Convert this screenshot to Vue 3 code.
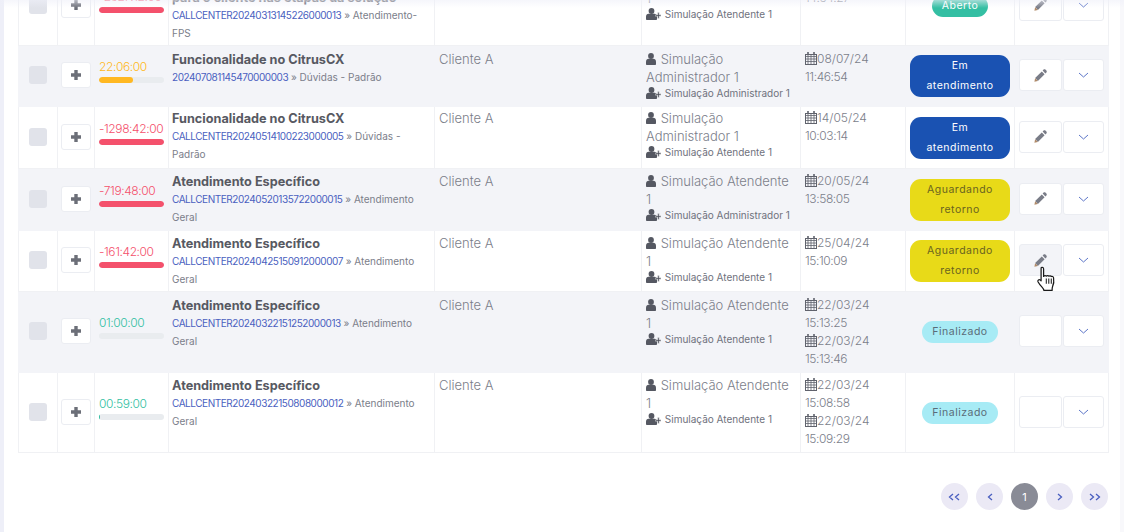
<template>
  <div class="page">
    <div class="panel">
      <table class="grid">
        <colgroup>
          <col v-for="w in colWidths" :key="w.id" :style="{ width: w.px + 'px' }" />
        </colgroup>
        <tbody>
          <tr v-for="(row, i) in rows" :key="i" :class="{ alt: i % 2 === 1 }" :style="{ height: row.h + 'px', '--pad': row.pad + 'px', '--pad2': (row.pad2 ?? row.pad) + 'px' }">
            <td class="c-check"><span class="check"></span></td>
            <td class="c-plus">
              <button class="plus">
                <svg width="12" height="12" viewBox="0 0 12 12"><path d="M4.300 1h3.400v3.300H11v3.400H7.700V11H4.300V7.700H1V4.300h3.300z" fill="#6c6f78" /></svg>
              </button>
            </td>
            <td class="c-time">
              <div class="time" :style="{ color: row.color }">{{ row.time }}</div>
              <div class="bar"><div class="fill" :style="{ width: row.pct + '%', background: row.barColor }"></div></div>
            </td>
            <td class="c-title">
              <div class="title">{{ row.title }}</div>
              <div class="sub"><a>{{ row.code }}</a> » {{ row.cat }}</div>
            </td>
            <td class="c-client">Cliente A</td>
            <td class="c-user">
              <div class="user">
                <svg class="ico-user" width="10" height="12" viewBox="0 0 10 12"><circle cx="5" cy="3" r="2.900" fill="#555862" /><path d="M0 11V8.500C0 6.800 1.200 5.700 2.600 5.700h4.800C8.800 5.700 10 6.800 10 8.500V11c0 .6-.4 1-1 1H1c-.6 0-1-.4-1-1z" fill="#555862" /></svg>
                {{ row.user }}
              </div>
              <div class="assigned">
                <svg class="ico-add" width="15" height="12" viewBox="0 0 15 12"><circle cx="5.500" cy="3" r="2.900" fill="#555862" /><path d="M0 11V8.500C0 7 1 5.800 2.500 5.800h6C10 5.800 11 7 11 8.500V11c0 .5-.3 1-1 1H1c-.7 0-1-.5-1-1z" fill="#555862" /><path d="M9.500 6.800h2.200V4.600h1.500v2.200H15v1.500h-1.800v2.200h-1.500V8.300H9.500z" fill="#555862" stroke="#fff" stroke-width=".4" /></svg>
                {{ row.assigned }}
              </div>
            </td>
            <td class="c-date">
              <div v-for="d in row.dates" :key="d[1]" class="date">
                <svg class="ico-cal" width="12" height="13" viewBox="0 0 12 13">
                  <rect x=".5" y="2.500" width="11" height="10" fill="none" stroke="#60636d" />
                  <path d="M0 4.500h12M0 7h12M0 9.500h12M3 2v11M6 2v11M9 2v11" stroke="#60636d" stroke-width=".8" />
                  <path d="M3 0v3M9 0v3" stroke="#60636d" stroke-width="1.600" />
                </svg><span class="day">{{ d[0] }}</span>
                <div class="clock">{{ d[1] }}</div>
              </div>
            </td>
            <td class="c-status">
              <span class="badge" :class="row.statusClass">{{ row.status }}</span>
            </td>
            <td class="c-actions">
              <div class="actions">
                <button class="act edit" :class="{ hover: row.hover }">
                  <svg v-if="row.edit" width="13" height="13" viewBox="0 0 13 13"><path d="M9.600.6c.5-.5 1.300-.5 1.800 0l1 1c.5.5.5 1.300 0 1.800l-1 1-2.800-2.800zM7.800 2.400l2.800 2.800-6.700 6.700-2.800-2.800z" fill="#797c87" /><path d="M1.100 9.200l2.800 2.800-3.500.7z" fill="#b08a68" /></svg>
                </button>
                <button class="act more">
                  <svg width="11" height="6" viewBox="0 0 11 6"><path d="M1 1l4.500 4L10 1" fill="none" stroke="#5d76c8" stroke-width="1" /></svg>
                </button>
                <svg v-if="row.hover" class="cursor" width="21" height="27" viewBox="0 0 20 26">
                  <path d="M5 1.500c1-.6 2.200 0 2.200 1.300V10l.3-.2c.5-.8 1.700-.8 2.300 0 .6-.8 1.800-.8 2.400 0 .7-.6 1.900-.5 2.400.3.800-.4 2 0 2.200 1.200.5 3 .2 6.200-1 8.700-.4.800-.4 2.300-.4 3.500H7.500c-.2-1.400-1-2.300-2-3.400-1.200-1.300-2.600-3-3.700-5-.6-1.200 1-2.600 2.100-1.700l.9 .9V3c0-.6.100-1.200.2-1.500z" fill="#fff" stroke="#1a1a1a" stroke-width="1.200" stroke-linejoin="round" />
                  <path d="M9.800 12v5M12.200 12v5M14.600 12v5" stroke="#1a1a1a" stroke-width="1" fill="none" />
                </svg>
              </div>
            </td>
          </tr>
        </tbody>
      </table>

      <nav class="pager">
        <button class="pg"><svg width="13" height="8" viewBox="0 0 13 8"><path d="M5 1L1.500 4 5 7M11 1L7.500 4 11 7" fill="none" stroke="#4a5fc0" stroke-width="1.300" /></svg></button>
        <button class="pg"><svg width="6" height="8" viewBox="0 0 6 8"><path d="M5 1L1.500 4 5 7" fill="none" stroke="#4a5fc0" stroke-width="1.300" /></svg></button>
        <button class="pg current">1</button>
        <button class="pg"><svg width="6" height="8" viewBox="0 0 6 8"><path d="M1 1l3.500 3L1 7" fill="none" stroke="#4a5fc0" stroke-width="1.300" /></svg></button>
        <button class="pg"><svg width="13" height="8" viewBox="0 0 13 8"><path d="M2 1l3.500 3L2 7M8 1l3.500 3L8 7" fill="none" stroke="#4a5fc0" stroke-width="1.300" /></svg></button>
      </nav>
    </div>
  </div>
</template>

<script setup>
const colWidths = [39, 37, 74, 266, 207, 159, 105, 109, 94].map((px, id) => ({ id, px }));

const red = "#f4516c";
const green = "#34bfa3";
const orange = "#ffb822";

// the list is scrolled: the first row is only half on screen
const rows = [
  { h: 80, pad: 2, pad2: 5, time: "-2627:12:00", color: red, pct: 100, barColor: red, title: "\npara o cliente nas etapas da solução", code: "CALLCENTER20240313145226000013", cat: "Atendimento-FPS", user: "Simulação Atendente 1", assigned: "Simulação Atendente 1", dates: [["13/03/24", "14:54:27"]], status: "Aberto", statusClass: "open", edit: true },
  { h: 61, pad: 4, time: "22:06:00", color: orange, pct: 53, barColor: orange, title: "Funcionalidade no CitrusCX", code: "202407081145470000003", cat: "Dúvidas - Padrão", user: "Simulação Administrador 1", assigned: "Simulação Administrador 1", dates: [["08/07/24", "11:46:54"]], status: "Em atendimento", statusClass: "progress", edit: true },
  { h: 62, pad: 2, time: "-1298:42:00", color: red, pct: 100, barColor: red, title: "Funcionalidade no CitrusCX", code: "CALLCENTER20240514100223000005", cat: "Dúvidas - Padrão", user: "Simulação Administrador 1", assigned: "Simulação Atendente 1", dates: [["14/05/24", "10:03:14"]], status: "Em atendimento", statusClass: "progress", edit: true },
  { h: 62, pad: 3, time: "-719:48:00", color: red, pct: 100, barColor: red, title: "Atendimento Específico", code: "CALLCENTER20240520135722000015", cat: "Atendimento Geral", user: "Simulação Atendente 1", assigned: "Simulação Administrador 1", dates: [["20/05/24", "13:58:05"]], status: "Aguardando retorno", statusClass: "waiting", edit: true },
  { h: 61, pad: 3, time: "-161:42:00", color: red, pct: 100, barColor: red, title: "Atendimento Específico", code: "CALLCENTER20240425150912000007", cat: "Atendimento Geral", user: "Simulação Atendente 1", assigned: "Simulação Atendente 1", dates: [["25/04/24", "15:10:09"]], status: "Aguardando retorno", statusClass: "waiting", edit: true, hover: true },
  { h: 81, pad: 4, time: "01:00:00", color: green, pct: 0, barColor: green, title: "Atendimento Específico", code: "CALLCENTER20240322151252000013", cat: "Atendimento Geral", user: "Simulação Atendente 1", assigned: "Simulação Atendente 1", dates: [["22/03/24", "15:13:25"], ["22/03/24", "15:13:46"]], status: "Finalizado", statusClass: "done", edit: false },
  { h: 80, pad: 3, time: "00:59:00", color: green, pct: 2, barColor: green, title: "Atendimento Específico", code: "CALLCENTER20240322150808000012", cat: "Atendimento Geral", user: "Simulação Atendente 1", assigned: "Simulação Atendente 1", dates: [["22/03/24", "15:08:58"], ["22/03/24", "15:09:29"]], status: "Finalizado", statusClass: "done", edit: false },
];
</script>

<style>
html, body {
  margin: 0;
  overflow: hidden;
  background: #fff;
}
</style>

<style scoped>
.page {
  width: 1124px;
  height: 532px;
  overflow: hidden;
  box-sizing: border-box;
  position: relative;
  font-family: Inter, "Open Sans", sans-serif;
  color: #7b7e8a;
}

.page::before {
  content: "";
  position: absolute;
  left: 0;
  right: 0;
  top: 0;
  height: 8px;
  z-index: 2;
  background: linear-gradient(rgba(239, 240, 249, 0.6), rgba(255, 255, 255, 0));
}

.panel {
  display: flow-root;
  box-sizing: border-box;
  height: 100%;
  padding: 0 11px 0 14px;
  background: #fff;
  border-left: 4px solid #eeeff8;
  border-right: 4px solid #f8f8fb;
}

.grid {
  width: 1090px;
  margin-top: -35px;
  border-collapse: collapse;
  table-layout: fixed;
}

.grid td {
  border: 1px solid #f0f1f4;
  padding: 0 4px;
  vertical-align: middle;
  font-size: 13px;
  line-height: 20px;
}

.grid tr.alt td {
  background: #f3f4f8;
  border-color: #f3f4f8;
}

.check {
  display: block;
  width: 18px;
  height: 18px;
  margin: 0 auto 2px;
  border-radius: 3px;
  background: #e1e3ea;
}

.grid td.c-plus {
  padding-left: 3px;
}

.plus {
  display: flex;
  align-items: center;
  justify-content: center;
  width: 30px;
  height: 26px;
  margin-bottom: 2px;
  padding: 0;
  background: #fff;
  border: 1px solid #ebedf2;
  border-radius: 3px;
}

.time {
  font-size: 12px;
  font-weight: 300;
  line-height: 20px;
  white-space: nowrap;
  letter-spacing: -0.4px;
}

.bar {
  height: 6px;
  margin-bottom: 12px;
  border-radius: 3px;
  background: #e9ecef;
  overflow: hidden;
}

.fill {
  height: 100%;
  border-radius: 3px;
}

.grid td.c-title {
  vertical-align: top;
  padding-top: var(--pad);
  padding-left: 3px;
}

.grid td.c-client {
  vertical-align: top;
  padding-top: calc(var(--pad) - 1px);
}

.title {
  font-weight: 700;
  font-size: 12.7px;
  line-height: 20px;
  color: #575962;
  white-space: pre-line;
}

.sub {
  margin-top: -2px;
  font-size: 10px;
  line-height: 18px;
  color: #7b7e8a;
}

.sub a {
  color: #4a5fc0;
  letter-spacing: -0.45px;
}

.c-client {
  font-size: 12.5px;
  font-weight: 300;
}

.grid td.c-user,
.grid td.c-date {
  vertical-align: top;
  padding-top: var(--pad2);
}

.user {
  font-size: 13px;
  font-weight: 300;
  line-height: 18px;
}

.ico-user {
  margin-right: 1px;
  vertical-align: -1px;
}

.assigned {
  font-size: 10px;
  line-height: 15px;
  white-space: nowrap;
  color: #6f727d;
}

.ico-add {
  margin-right: 1px;
  vertical-align: -2px;
}

.date {
  font-size: 12px;
  font-weight: 300;
  line-height: 18px;
}

.ico-cal {
  vertical-align: -2px;
}

.clock {
  letter-spacing: -0.4px;
}

.c-status {
  text-align: center;
}

.badge {
  display: inline-block;
  box-sizing: border-box;
  vertical-align: middle;
  font-size: 10.5px;
  line-height: 20px;
  letter-spacing: 0.5px;
  padding: 1px 10px;
  border-radius: 11px;
}

.open {
  min-width: 56px;
  background: #34bfa3;
  color: #fff;
}

.progress {
  width: 100px;
  background: #1a52b2;
  color: #fff;
}

.waiting {
  width: 100px;
  background: #e8da18;
  color: #6a6420;
}

.done {
  min-width: 74px;
  background: #a7ebf5;
  color: #5a6b78;
}

.actions {
  display: flex;
  gap: 1px;
  position: relative;
  margin-bottom: 2px;
}

.act {
  display: flex;
  align-items: center;
  justify-content: center;
  height: 32px;
  padding: 0;
  background: #fff;
  border: 1px solid #ebedf2;
  border-radius: 3px;
}

.edit {
  width: 43px;
}

.more {
  width: 41px;
}

.hover {
  background: #f3f4f8;
}

.cursor {
  position: absolute;
  left: 17px;
  top: 22px;
}

.pager {
  display: flex;
  justify-content: flex-end;
  gap: 8px;
  margin: 30px 1px 0 0;
}

.pg {
  display: flex;
  align-items: center;
  justify-content: center;
  width: 27px;
  height: 27px;
  padding: 0;
  border: 0;
  border-radius: 50%;
  background: #ebe9f5;
  font-family: inherit;
  font-size: 11px;
}

.current {
  background: #898b96;
  color: #fff;
}
</style>
